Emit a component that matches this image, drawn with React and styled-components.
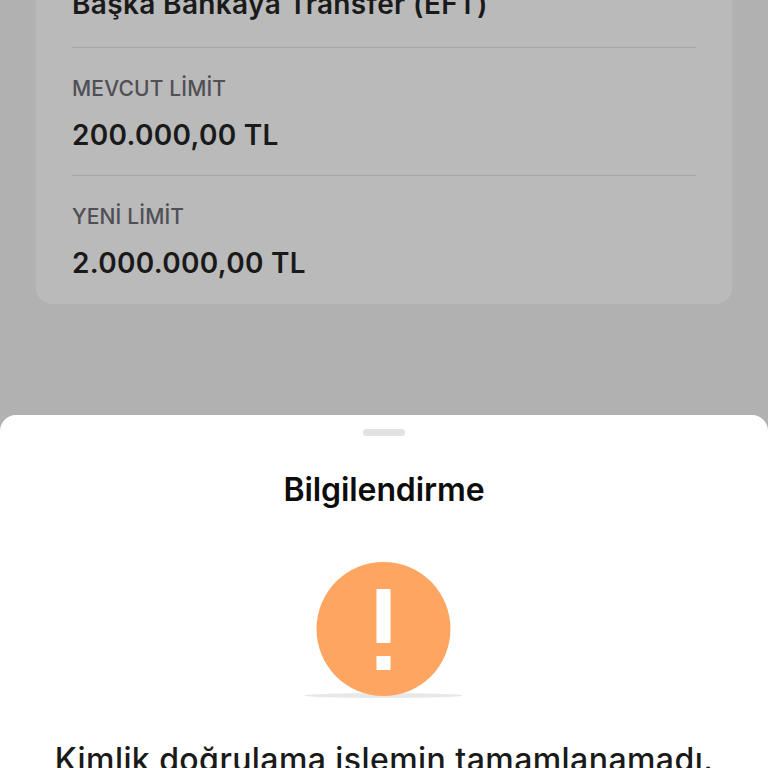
import styled, { createGlobalStyle } from 'styled-components';

const GlobalStyle = createGlobalStyle`
    html, body {
        margin: 0;
        padding: 0;
    }
    body {
        font-family: 'Inter', 'Liberation Sans', sans-serif;
    }
`;

const rows = [
    { label: 'MEVCUT LİMİT', value: '200.000,00 TL' },
    { label: 'YENİ LİMİT', value: '2.000.000,00 TL' },
];

export default function App() {
    return (
        <Screen>
            <GlobalStyle />
            <Card>
                <TopValue>Başka Bankaya Transfer (EFT)</TopValue>
                {rows.map((row) => (
                    <Row key={row.label}>
                        <Label>{row.label}</Label>
                        <Value>{row.value}</Value>
                    </Row>
                ))}
            </Card>
            <Sheet>
                <Handle />
                <Title>Bilgilendirme</Title>
                <IconWrap>
                    <svg width="160" height="140" viewBox="0 0 160 140">
                        <ellipse cx="79.5" cy="133.5" rx="79" ry="2.5" fill="#e8e8e8" />
                        <circle cx="79.5" cy="67" r="67" fill="#ffa562" />
                        <rect x="72.5" y="27" width="14" height="54" fill="#fff" />
                        <rect x="72.5" y="94" width="14" height="14" fill="#fff" />
                    </svg>
                </IconWrap>
                <Message>Kimlik doğrulama işlemin tamamlanamadı.</Message>
            </Sheet>
        </Screen>
    );
}

const Screen = styled.div`
    width: 768px;
    height: 768px;
    overflow: hidden;
    display: flex;
    flex-direction: column;
    background: #b1b1b1;
`;

const Card = styled.div`
    box-sizing: border-box;
    height: 340px;
    margin: -36px 36px 0;
    padding: 0 36px;
    flex-shrink: 0;
    background: #bababa;
    border-radius: 16px;
`;

const TopValue = styled.div`
    box-sizing: border-box;
    height: 83px;
    padding-top: 24px;
    font-size: 28px;
    line-height: 32px;
    font-weight: 600;
    letter-spacing: 0.35px;
    color: #1a1a1a;
`;

const Row = styled.div`
    height: 128px;
    box-sizing: border-box;
    border-top: 1px solid #a6a6a6;
    padding-top: 28px;
`;

const Label = styled.div`
    font-size: 21px;
    line-height: 26px;
    font-weight: 500;
    letter-spacing: 0.15px;
    color: #4f4f54;
`;

const Value = styled.div`
    margin-top: 17px;
    font-size: 28px;
    line-height: 32px;
    font-weight: 600;
    letter-spacing: 0.3px;
    color: #1a1a1a;
`;

const Sheet = styled.div`
    margin-top: auto;
    height: 353px;
    flex-shrink: 0;
    background: #fff;
    border-radius: 16px 16px 0 0;
    display: flex;
    flex-direction: column;
    align-items: center;
    overflow: hidden;
`;

const Handle = styled.div`
    width: 42px;
    height: 7px;
    flex-shrink: 0;
    margin-top: 14px;
    border-radius: 4px;
    background: #e2e2e2;
`;

const Title = styled.div`
    margin-top: 35px;
    flex-shrink: 0;
    font-size: 32px;
    line-height: 38px;
    font-weight: 600;
    letter-spacing: -0.1px;
    color: #0d0d0d;
`;

const IconWrap = styled.div`
    margin-top: 53px;
    height: 140px;
    flex-shrink: 0;
    line-height: 0;
`;

const Message = styled.div`
    margin-top: 39px;
    flex-shrink: 0;
    font-size: 32px;
    line-height: 38px;
    font-weight: 500;
    letter-spacing: 0.43px;
    color: #1a1a1a;
    white-space: nowrap;
`;
